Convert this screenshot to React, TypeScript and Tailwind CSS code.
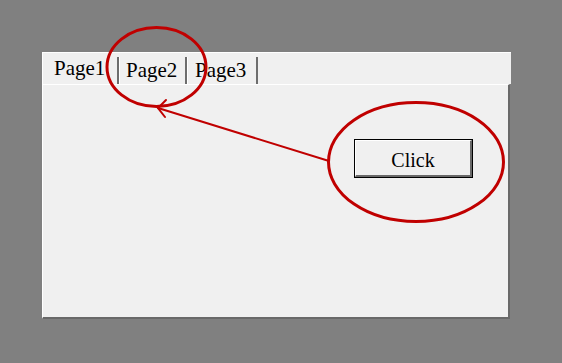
const tabs = [
  { label: "Page1", w: "w-[76px]", pl: "pl-[11px]", pb: "pb-[5px]", first: true },
  { label: "Page2", w: "w-[68px]", pl: "pl-[6px]", pb: "pb-[3px]", first: false },
  { label: "Page3", w: "w-[71px]", pl: "pl-[7px]", pb: "pb-[3px]", first: false },
];

const App = () => {
  return (
    <div className="relative w-[562px] h-[363px] overflow-hidden bg-[#808080] pt-[52px] pl-[42px] font-['Liberation_Serif',serif] text-black">
      {/* Tab control */}
      <div className="w-[469px]">
        <div className="h-[32px] bg-[#f0f0f0] border-t border-l border-white flex items-end">
          {tabs.map((t) => (
            <div
              key={t.label}
              className={`${t.w} h-[27px] flex items-end ${t.pl} ${t.pb} border-r-2 border-r-[#6d6d6d] ${
                t.first ? "" : "border-l border-l-white"
              } text-[21px] leading-none`}
            >
              {t.label}
            </div>
          ))}
        </div>
        <div className="w-[468px] h-[235px] bg-[#f0f0f0] border-t border-l border-white border-r-2 border-b-2 border-r-[#696969] border-b-[#696969] pt-[54px] pl-[311px]">
          <button className="w-[119px] h-[39px] border border-black bg-[#f0f0f0] p-0">
            <div className="w-full h-full border-t border-l border-white border-r-2 border-b-2 border-r-[#696969] border-b-[#696969] flex items-center justify-center pt-[3px] text-[20px]">
              Click
            </div>
          </button>
        </div>
      </div>

      {/* Annotation overlay */}
      <svg className="absolute inset-0 pointer-events-none" width="562" height="363" viewBox="0 0 562 363">
        <g fill="none" stroke="#c00000" strokeWidth="3">
          <ellipse cx="156.5" cy="67" rx="49.5" ry="39.5" />
          <ellipse cx="416" cy="162" rx="87.5" ry="59.5" />
        </g>
        <g fill="none" stroke="#c00000" strokeWidth="2" strokeLinecap="round">
          <line x1="329" y1="161" x2="158" y2="108" />
          <polyline points="166,100 158,108 165,117" />
        </g>
      </svg>
    </div>
  );
};

export default App;
